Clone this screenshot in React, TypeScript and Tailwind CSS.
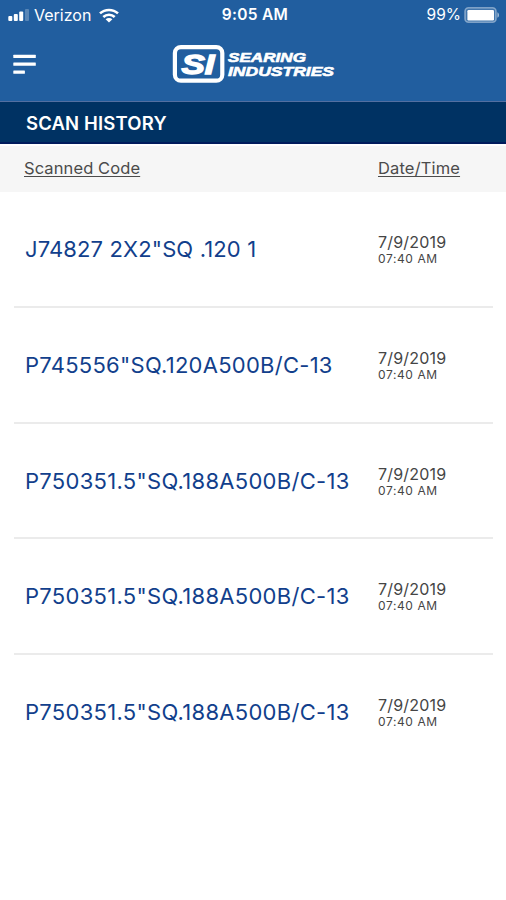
type Scan = { code: string; date: string; time: string; tracking: string };

const scans: Scan[] = [
  { code: 'J74827 2X2"SQ .120 1', date: "7/9/2019", time: "07:40 AM", tracking: "tracking-[0.13px]" },
  { code: 'P745556"SQ.120A500B/C-13', date: "7/9/2019", time: "07:40 AM", tracking: "tracking-[0.26px]" },
  { code: 'P750351.5"SQ.188A500B/C-13', date: "7/9/2019", time: "07:40 AM", tracking: "tracking-[0.29px]" },
  { code: 'P750351.5"SQ.188A500B/C-13', date: "7/9/2019", time: "07:40 AM", tracking: "tracking-[0.29px]" },
  { code: 'P750351.5"SQ.188A500B/C-13', date: "7/9/2019", time: "07:40 AM", tracking: "tracking-[0.29px]" },
];

function SignalIcon() {
  return (
    <svg width="23" height="14" viewBox="0 0 23 14" fill="#fff">
      <rect x="0.3" y="8" width="4" height="5" rx="1" />
      <rect x="5.8" y="6" width="4" height="7" rx="1" />
      <rect x="11.2" y="3.5" width="4" height="9.5" rx="1" />
      <rect x="17" y="1" width="4" height="12" rx="1" opacity="0.25" />
    </svg>
  );
}

function WifiIcon() {
  return (
    <svg width="20" height="15" viewBox="0 0 20 15" fill="none" stroke="#fff" strokeWidth="2.6">
      <path d="M1 5.4C6 0.8 14 0.8 19 5.4" />
      <path d="M4.3 9C7.5 6 12.5 6 15.7 9" />
      <path d="M10 14.6L6.6 11.2C8.5 9.5 11.5 9.5 13.4 11.2Z" fill="#fff" stroke="none" />
    </svg>
  );
}

function BatteryIcon() {
  return (
    <svg width="36" height="16" viewBox="0 0 36 16">
      <rect x="1" y="0.8" width="31" height="14.4" rx="3.5" fill="#fff" fillOpacity="0.15" stroke="#fff" strokeOpacity="0.4" strokeWidth="1.6" />
      <rect x="3.4" y="3" width="26.6" height="10.4" rx="1.2" fill="#fff" />
      <path d="M33.4 5.2C35.6 6.2 35.6 9.8 33.4 10.8Z" fill="#fff" fillOpacity="0.55" />
    </svg>
  );
}

function Logo() {
  return (
    <svg width="164" height="40" viewBox="0 0 164 40" fill="#fff" fontFamily="'Liberation Sans', Arial, sans-serif" fontWeight="700" fontStyle="italic">
      <rect x="2.9" y="3.1" width="47.4" height="33.6" rx="6" fill="none" stroke="#fff" strokeWidth="4.2" />
      <g stroke="#fff" strokeWidth="1.4">
        <text x="9.5" y="29.8" fontSize="28" textLength="33" lengthAdjust="spacingAndGlyphs">SI</text>
      </g>
      <g stroke="#fff" strokeWidth="0.6">
        <text x="56" y="18.4" fontSize="13.2" textLength="78" lengthAdjust="spacingAndGlyphs">SEARING</text>
        <text x="56" y="31.8" fontSize="13.2" textLength="106" lengthAdjust="spacingAndGlyphs">INDUSTRIES</text>
      </g>
    </svg>
  );
}

function MenuIcon() {
  return (
    <svg width="24" height="22" viewBox="0 0 24 22" fill="#fff">
      <rect x="0.3" y="0.8" width="22.5" height="3.2" rx="0.5" />
      <rect x="0.3" y="8.6" width="22.5" height="3.2" rx="0.5" />
      <rect x="0.3" y="16.6" width="11.6" height="3.2" rx="0.5" />
    </svg>
  );
}

export default function App() {
  return (
    <div className="flex h-[900px] w-[506px] flex-col overflow-hidden bg-white font-['Inter',sans-serif]">
      <header className="flex h-[102px] shrink-0 flex-col border-b border-[#536fa1] bg-[#215e9f] text-white">
        <div className="grid h-[30px] grid-cols-3 items-center pl-2 pr-[6px]">
          <div className="flex items-center">
            <SignalIcon />
            <span className="ml-[3px] mr-[8px] text-[16px] leading-[30px]">Verizon</span>
            <WifiIcon />
          </div>
          <div className="pl-[2px] text-center text-[15.5px] font-semibold leading-[30px] tracking-[0.3px]">9:05 AM</div>
          <div className="flex items-center justify-end gap-[3px]">
            <span className="text-[15.5px] leading-[30px]">99%</span>
            <BatteryIcon />
          </div>
        </div>
        <div className="flex pl-[13px] pt-[14px]">
          <div className="w-[159px] pt-[10px]">
            <MenuIcon />
          </div>
          <Logo />
        </div>
      </header>
      <h1 className="flex h-[42px] shrink-0 items-center border-b-2 border-[#001b5c] bg-[#003263] pl-[26px] pt-[3px] text-[18.5px] font-semibold tracking-[0.15px] text-white">
        SCAN HISTORY
      </h1>
      <div className="flex h-[48px] shrink-0 items-center border-t-2 border-white bg-[#f6f6f6] pb-[2px] pl-[24px] text-[16.5px] text-[#4b4b4b] underline decoration-1 underline-offset-2">
        <span className="w-[354px] tracking-[0.1px]">Scanned Code</span>
        <span className="tracking-[0.15px]">Date/Time</span>
      </div>
      <ul className="flex flex-col pl-[14px] pr-[13px] pt-[0.3px]">
        {scans.map((scan, i) => (
          <li key={i} className="flex h-[115.7px] items-center border-b-2 border-[#ebebeb] pl-[11px] last:border-transparent">
            <span className={`w-[353px] whitespace-nowrap pt-[1px] text-[22px] text-[#123f8c] ${scan.tracking}`}>{scan.code}</span>
            <div className="flex flex-col pt-[2px] text-[#454545]">
              <span className="text-[16px] leading-[18px] tracking-[0.2px]">{scan.date}</span>
              <span className="text-[12px] leading-[16px] tracking-[0.6px]">{scan.time}</span>
            </div>
          </li>
        ))}
      </ul>
    </div>
  );
}
